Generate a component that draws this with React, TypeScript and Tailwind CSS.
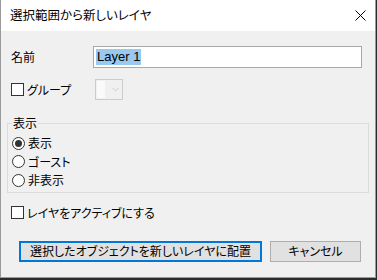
import { ChevronDown } from 'lucide-react'

const font = "font-['Noto_Sans_CJK_JP','Noto_Sans',sans-serif] [font-feature-settings:'palt']"

function CheckBox({ label }: { label: string }) {
  return (
    <div className="flex items-center h-full">
      <span className="w-[13px] h-[13px] border border-[#333333] bg-white shrink-0" />
      <span className="ml-[3px] text-[12px] leading-none text-black">{label}</span>
    </div>
  )
}

function Radio({ label, checked }: { label: string; checked?: boolean }) {
  return (
    <div className="flex items-center h-[18.5px] pl-[4px]">
      <span className="w-[13px] h-[13px] rounded-full border border-[#333333] bg-white shrink-0 flex items-center justify-center">
        {checked && <span className="w-[7px] h-[7px] rounded-full bg-[#333333]" />}
      </span>
      <span className="ml-[3px] text-[12px] leading-none text-black">{label}</span>
    </div>
  )
}

export default function App() {
  return (
    <div className={`w-[377px] h-[280px] bg-[#2b2b2b] ${font}`}>
      <div className="w-[376px] h-[278px] bg-[#f0f0f0] border-x border-b border-[#9a9a9a] flex flex-col">
        {/* title bar */}
        <div className="h-[31px] bg-white flex items-center justify-between pl-[9px] pr-[9px] shrink-0">
          <span className="text-[12.5px] text-black">選択範囲から新しいレイヤ</span>
          <svg width="11" height="11" viewBox="0 0 11 11" className="text-black">
            <path d="M0.5 0.5 L10.5 10.5 M10.5 0.5 L0.5 10.5" stroke="currentColor" strokeWidth="1" fill="none" />
          </svg>
        </div>

        <div className="flex flex-col px-[9px]">
          {/* name */}
          <div className="mt-[15px] h-[22px] flex items-center">
            <span className="w-[83px] pl-[1px] text-[12px] text-black">名前</span>
            <div className="w-[269px] h-[22px] border border-[#a8a8a8] bg-white flex items-center px-[2px]">
              <span className="bg-[#99c9ef] text-[13px] leading-[16px] px-[1px] text-black font-['Liberation_Sans',sans-serif]">
                Layer 1
              </span>
            </div>
          </div>

          {/* group */}
          <div className="mt-[11px] h-[21px] flex items-center">
            <div className="w-[85px] h-full pl-[1px]">
              <CheckBox label="グループ" />
            </div>
            <div className="w-[28px] h-[21px] border border-[#cccccc] bg-[#f0f0f0] flex items-center">
              <span className="w-[8px] h-[17px] ml-[1px] bg-[#fafafa]" />
              <ChevronDown size={11} strokeWidth={1} className="ml-[5px] text-[#a0a0a0]" />
            </div>
          </div>

          {/* display groupbox */}
          <fieldset className="mt-[15px] -mx-[3px] border border-[#dcdcdc] px-0 pb-[2px]">
            <legend className="ml-[4px] px-[1px] text-[12px] leading-[16px] text-black">表示</legend>
            <div className="pt-[3px] flex flex-col">
              <Radio label="表示" checked />
              <Radio label="ゴースト" />
              <Radio label="非表示" />
            </div>
          </fieldset>

          {/* active */}
          <div className="mt-[10px] h-[20px] pl-[1px]">
            <CheckBox label="レイヤをアクティブにする" />
          </div>

          {/* buttons */}
          <div className="mt-[18px] flex gap-[8px] pl-[9px]">
            <button className="w-[243px] h-[21px] border-2 border-[#0078d7] bg-[#e1e1e1] text-[12px] leading-none text-black flex items-center justify-center">
              選択したオブジェクトを新しいレイヤに配置
            </button>
            <button className="w-[91px] h-[21px] border border-[#adadad] bg-[#e1e1e1] text-[12px] leading-none text-black flex items-center justify-center">
              キャンセル
            </button>
          </div>
        </div>
      </div>
    </div>
  )
}
